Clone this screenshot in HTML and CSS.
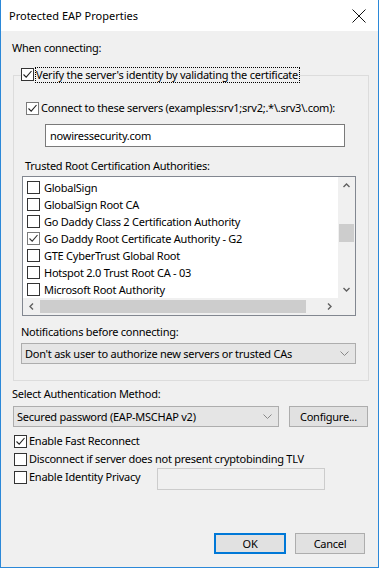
FILE: index.html
```html
<!DOCTYPE html>
<html>
<head>
<meta charset="utf-8">
<link rel="stylesheet" href="styles.css">
</head>
<body>
<div class="window">
  <div class="titlebar">
    <span class="title">Protected EAP Properties</span>
    <svg class="close" width="14" height="14" viewBox="0 0 14 14"><path d="M0.5 0.5L13.5 13.5M13.5 0.5L0.5 13.5" stroke="#111" stroke-width="1" fill="none"/></svg>
  </div>
  <div class="content">
    <div class="label l-when">When connecting:</div>
    <fieldset class="group">
      <legend class="legend"><span class="cb"><svg viewBox="0 0 11 11"><path d="M1.5 5.5L4.2 8.2L9.5 2" fill="none" stroke="#222" stroke-width="1.1"/></svg></span><span class="focus">Verify the server's identity by validating the certificate</span></legend>
      <div class="check-row connect"><span class="cb light"><svg viewBox="0 0 11 11"><path d="M1.5 5.5L4.2 8.2L9.5 2" fill="none" stroke="#222" stroke-width="1.1"/></svg></span><span>Connect to these servers (examples:srv1;srv2;.*\.srv3\.com):</span></div>
      <div class="textbox servers">nowiressecurity.com</div>
      <div class="label l-trusted">Trusted Root Certification Authorities:</div>
      <div class="listbox">
        <div class="items">
          <div class="item"><span class="cb"></span>GlobalSign</div>
          <div class="item"><span class="cb"></span>GlobalSign Root CA</div>
          <div class="item"><span class="cb"></span>Go Daddy Class 2 Certification Authority</div>
          <div class="item"><span class="cb light"><svg viewBox="0 0 11 11"><path d="M1.5 5.5L4.2 8.2L9.5 2" fill="none" stroke="#333" stroke-width="1.1"/></svg></span>Go Daddy Root Certificate Authority - G2</div>
          <div class="item"><span class="cb"></span>GTE CyberTrust Global Root</div>
          <div class="item"><span class="cb"></span>Hotspot 2.0 Trust Root CA - 03</div>
          <div class="item"><span class="cb"></span>Microsoft Root Authority</div>
        </div>
        <div class="vscroll">
          <svg class="arrow" width="17" height="17" viewBox="0 0 17 17"><path d="M5.5 10L8.5 7L11.5 10" fill="none" stroke="#606060" stroke-width="1.4"/></svg>
          <div class="vthumb"></div>
          <svg class="arrow down" width="17" height="17" viewBox="0 0 17 17"><path d="M5.5 7L8.5 10L11.5 7" fill="none" stroke="#606060" stroke-width="1.4"/></svg>
        </div>
        <div class="hscroll">
          <svg class="arrow" width="17" height="17" viewBox="0 0 17 17"><path d="M10 5.5L7 8.5L10 11.5" fill="none" stroke="#606060" stroke-width="1.4"/></svg>
          <div class="hthumb"></div>
          <svg class="arrow right" width="17" height="17" viewBox="0 0 17 17"><path d="M7 5.5L10 8.5L7 11.5" fill="none" stroke="#606060" stroke-width="1.4"/></svg>
        </div>
        <div class="corner"></div>
      </div>
      <div class="label l-notif">Notifications before connecting:</div>
      <div class="combo notif"><span class="combo-text">Don't ask user to authorize new servers or trusted CAs</span><svg class="chev" width="9" height="5" viewBox="0 0 9 5"><path d="M0.5 0.5L4.5 4.5L8.5 0.5" fill="none" stroke="#888" stroke-width="1"/></svg></div>
    </fieldset>
    <div class="label l-auth">Select Authentication Method:</div>
    <div class="auth-row">
      <div class="combo auth"><span class="combo-text">Secured password (EAP-MSCHAP v2)</span><svg class="chev" width="9" height="5" viewBox="0 0 9 5"><path d="M0.5 0.5L4.5 4.5L8.5 0.5" fill="none" stroke="#888" stroke-width="1"/></svg></div>
      <div class="button configure">Configure...</div>
    </div>
    <div class="checks">
      <div class="check-row opt"><span class="cb"><svg viewBox="0 0 11 11"><path d="M1.5 5.5L4.2 8.2L9.5 2" fill="none" stroke="#222" stroke-width="1.1"/></svg></span><span>Enable Fast Reconnect</span></div>
      <div class="check-row opt"><span class="cb"></span><span>Disconnect if server does not present cryptobinding TLV</span></div>
      <div class="privacy-row">
        <div class="check-row opt privacy-label"><span class="cb"></span><span>Enable Identity Privacy</span></div>
        <div class="textbox disabled"></div>
      </div>
    </div>
  </div>
  <div class="footer">
    <div class="button ok">OK</div>
    <div class="button cancel">Cancel</div>
  </div>
</div>
</body>
</html>
```
FILE: styles.css
```css
html, body {
  margin: 0;
  padding: 0;
  background: #f0f0f0;
}
body {
  font-family: "Noto Sans", "Open Sans", sans-serif;
  font-size: 11px;
  line-height: 16px;
  letter-spacing: -0.25px;
  color: #000;
}
.window {
  box-sizing: border-box;
  width: 379px;
  height: 568px;
  border: 1px solid #2b88d8;
  border-top: none;
  background: #f0f0f0;
  display: flex;
  flex-direction: column;
  overflow: hidden;
}
.titlebar {
  flex: none;
  height: 31px;
  background: #fff;
  display: flex;
  align-items: center;
  justify-content: space-between;
  padding: 0 12px 0 8px;
}
.title {
  line-height: 16px;
  letter-spacing: 0;
}
.close {
  display: block;
}
.content {
  flex: none;
  padding-left: 11px;
}
.label {
  height: 16px;
}
.l-when { margin-top: 9px; }
.group {
  box-sizing: border-box;
  width: 356px;
  margin: 11px 0 0 1px;
  padding: 0 0 16px 0;
  border: 1px solid #dcdcdc;
  min-inline-size: auto;
}
.legend {
  margin-left: 7px;
  padding: 0;
  height: 16px;
  line-height: 16px;
  white-space: nowrap;
}
.cb {
  box-sizing: border-box;
  display: inline-block;
  flex: none;
  width: 13px;
  height: 13px;
  border: 1px solid #333;
  background: #fff;
  vertical-align: middle;
  position: relative;
}
.cb.light {
  border-color: #7a7a7a;
}
.cb svg {
  display: block;
  width: 11px;
  height: 11px;
}
.legend .cb {
  vertical-align: -2px;
}
.focus {
  display: inline-block;
  margin-left: 1px;
  border: 1px dotted #000;
  line-height: 14px;
  padding: 0 1px 0 0;
  vertical-align: top;
}
.check-row {
  display: flex;
  align-items: center;
  gap: 2px;
  white-space: nowrap;
}
.connect {
  height: 16px;
  margin-top: 17px;
  padding-left: 12px;
}
.textbox {
  box-sizing: border-box;
  background: #fff;
  border: 1px solid #7a7a7a;
}
.servers {
  margin: 8px 0 0 31px;
  width: 300px;
  height: 23px;
  line-height: 21px;
  padding-left: 4px;
}
.l-trusted {
  margin: 11px 0 0 11px;
}
.listbox {
  box-sizing: border-box;
  margin: 2px 0 0 8px;
  width: 334px;
  height: 140px;
  border: 1px solid #828790;
  background: #fff;
  display: grid;
  grid-template-columns: 1fr 17px;
  grid-template-rows: 1fr 17px;
}
.items {
  overflow: hidden;
  padding-top: 2px;
}
.item {
  height: 17px;
  display: flex;
  align-items: center;
  gap: 4px;
  padding-left: 4px;
  white-space: nowrap;
}
.vscroll {
  background: #f0f0f0;
  display: flex;
  flex-direction: column;
}
.arrow {
  display: block;
  flex: none;
}
.vthumb {
  height: 18px;
  margin: 30px 1px 0 1px;
  background: #cdcdcd;
}
.down {
  margin-top: auto;
}
.hscroll {
  background: #f0f0f0;
  display: flex;
}
.hthumb {
  width: 266px;
  margin: 2px 0;
  background: #cdcdcd;
}
.right {
  margin-left: auto;
}
.corner {
  background: #f0f0f0;
}
.l-notif {
  margin: 8px 0 0 7px;
}
.combo {
  box-sizing: border-box;
  background: #e5e5e5;
  border: 1px solid #adadad;
  display: flex;
  align-items: center;
  justify-content: space-between;
  white-space: nowrap;
}
.combo-text {
  line-height: 16px;
}
.notif {
  margin: 3px 0 0 7px;
  width: 335px;
  height: 21px;
  padding: 0 6px 0 3px;
}
.l-auth {
  margin-top: 5px;
}
.auth-row {
  display: flex;
  gap: 10px;
  margin: 4px 0 0 1px;
}
.auth {
  width: 266px;
  height: 21px;
  padding: 0 6px 0 3px;
}
.button {
  box-sizing: border-box;
  background: #e1e1e1;
  border: 1px solid #adadad;
  display: flex;
  align-items: center;
  justify-content: center;
  height: 21px;
}
.configure {
  width: 79px;
}
.checks {
  margin: 5px 0 0 2px;
}
.opt {
  height: 18px;
}
.privacy-row {
  display: flex;
  align-items: flex-start;
}
.privacy-label {
  width: 143px;
}
.textbox.disabled {
  width: 168px;
  height: 22px;
  background: #f0f0f0;
  border-color: #cccccc;
}
.footer {
  margin-top: auto;
  display: flex;
  justify-content: flex-end;
  gap: 9px;
  padding: 0 13px 13px 0;
}
.ok {
  width: 72px;
  border: 2px solid #0078d7;
}
.cancel {
  width: 70px;
}
```
